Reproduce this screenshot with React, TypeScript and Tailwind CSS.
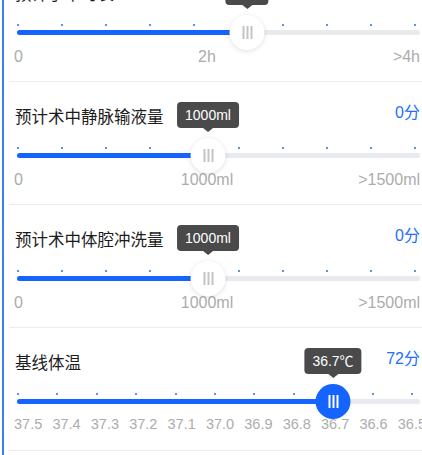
import React from 'react';

type Row = {
  title: string;
  score: string;
  tip: string;
  thumb: number;
  dots: number;
  active?: boolean;
  labels: string[];
  scale?: boolean;
};

const rows: Row[] = [
  { title: '预计手术时长', score: '15分', tip: '2.5h', thumb: 232, dots: 10, labels: ['0', '2h', '>4h'] },
  { title: '预计术中静脉输液量', score: '0分', tip: '1000ml', thumb: 193, dots: 10, labels: ['0', '1000ml', '>1500ml'] },
  { title: '预计术中体腔冲洗量', score: '0分', tip: '1000ml', thumb: 193, dots: 10, labels: ['0', '1000ml', '>1500ml'] },
  {
    title: '基线体温',
    score: '72分',
    tip: '36.7℃',
    thumb: 318,
    dots: 11,
    active: true,
    scale: true,
    labels: ['37.5', '37.4', '37.3', '37.2', '37.1', '37.0', '36.9', '36.8', '36.7', '36.6', '36.5'],
  },
];

function Slider({ row }: { row: Row }) {
  return (
    <div className="relative h-[41px]">
      {/* step marks */}
      <div
        className={`absolute top-[18px] left-[2px] flex justify-between ${row.dots === 11 ? 'right-[7px]' : 'right-[4px]'}`}
      >
        {Array.from({ length: row.dots }).map((_, i) => (
          <span key={i} className="w-[2px] h-[2px] rounded-full bg-[#2a68f5]" />
        ))}
      </div>
      <div className="absolute top-[23.5px] left-[2px] right-0 h-[5px] rounded-full bg-[#e9e9ee]" />
      <div className="absolute top-[23.5px] left-[2px] h-[5px] rounded-full bg-[#1664ff]" style={{ width: row.thumb - 2 }} />

      {/* tooltip */}
      <div className="absolute top-[-27px] -translate-x-1/2 flex flex-col items-center" style={{ left: row.thumb }}>
        <div className="h-[26px] px-[8px] rounded-[4px] bg-[#4a4a4a] text-white text-[14px] leading-[26px] whitespace-nowrap">
          {row.tip}
        </div>
        <div className="w-0 h-0 border-x-[5px] border-x-transparent border-t-[4px] border-t-[#4a4a4a]" />
      </div>

      {/* thumb */}
      <div
        className={`absolute top-[8.5px] w-[35px] h-[35px] -translate-x-1/2 rounded-full flex items-center justify-center gap-[2px] ${
          row.active ? 'bg-[#1664ff]' : 'bg-white shadow-[0_1px_5px_rgba(0,0,0,0.13)]'
        }`}
        style={{ left: row.thumb }}
      >
        {[0, 1, 2].map((i) => (
          <span key={i} className={`w-[2px] h-[13px] ${row.active ? 'bg-white' : 'bg-[#c4c4c4]'}`} />
        ))}
      </div>
    </div>
  );
}

function Section({ row }: { row: Row }) {
  return (
    <div className="h-[123px] border-b border-[#ececec] pl-[6px] pr-[2px]">
      <div className="flex justify-between items-start pt-[19px]">
        <span className="mt-[4px] text-[16.5px] leading-[24px] text-[#1c1c1c]">{row.title}</span>
        <span className="text-[16px] leading-[24px] text-[#1f6fff]">{row.score}</span>
      </div>
      <Slider row={row} />
      {row.scale ? (
        <div className="flex justify-between ml-[-1px] mr-[-6px] text-[14.5px] leading-[16px] text-[#acacac] whitespace-nowrap">
          {row.labels.map((l) => (
            <span key={l}>{l}</span>
          ))}
        </div>
      ) : (
        <div className="flex ml-[-1px] text-[16px] leading-[20px] text-[#acacac] whitespace-nowrap">
          <span className="flex-1">{row.labels[0]}</span>
          <span className="mr-[20px]">{row.labels[1]}</span>
          <span className="flex-1 text-right">{row.labels[2]}</span>
        </div>
      )}
    </div>
  );
}

export default function App() {
  return (
    <div className="flex h-[455px] w-[422px] overflow-hidden bg-white font-['Liberation_Sans','Noto_Sans_CJK_SC',sans-serif]">
      <div className="w-[2px] shrink-0" />
      <div className="w-[2px] shrink-0 bg-[#3d7ef5]" />
      <div className="flex-1 min-w-0 overflow-hidden">
        <div className="mt-[-41px] pl-[5px]">
          {rows.map((r) => (
            <Section key={r.title} row={r} />
          ))}
        </div>
      </div>
    </div>
  );
}
